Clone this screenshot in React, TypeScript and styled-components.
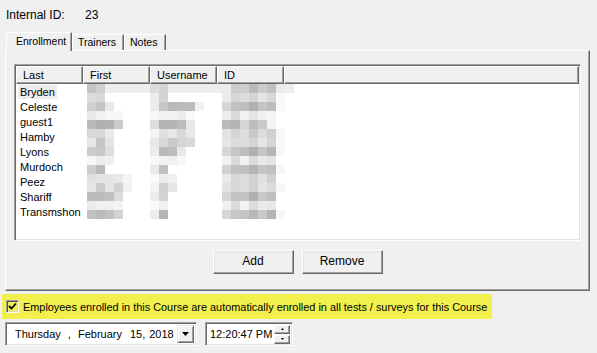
import * as React from 'react';
import styled, { createGlobalStyle } from 'styled-components';

const GlobalStyle = createGlobalStyle`
  body {
    margin: 0;
    background: #f0f0f0;
    font-family: "Liberation Sans", Arial, sans-serif;
    font-size: 11px;
    color: #000;
  }
`;

const Page = styled.div`
  width: 597px;
  height: 353px;
  overflow: hidden;
  background: #f0f0f0;
  white-space: nowrap;
`;

const IdRow = styled.div`
  display: flex;
  padding: 8px 0 0 6px;
  height: 14px;
  margin-bottom: 10px;
  font-size: 12px;
  line-height: 14px;
`;

const IdLabel = styled.span`
  width: 79px;
`;

const TabStrip = styled.div`
  position: relative;
  z-index: 1;
  display: flex;
  align-items: flex-end;
  height: 19px;
  padding-left: 6px;
  margin-bottom: -1px;
`;

const Tab = styled.div<{ $active?: boolean; $w: number }>`
  box-sizing: border-box;
  width: ${p => p.$w}px;
  height: ${p => (p.$active ? 19 : 16)}px;
  margin-bottom: ${p => (p.$active ? 0 : 1)}px;
  padding-left: ${p => (p.$active ? 9 : 5)}px;
  background: #f0f0f0;
  border-top: 1px solid #fff;
  border-left: 1px solid #fff;
  border-right: 1px solid #696969;
  box-shadow: inset -1px 0 #a0a0a0;
  font-size: 10.5px;
  line-height: ${p => (p.$active ? 16 : 15)}px;
`;

const Panel = styled.div`
  box-sizing: border-box;
  margin-left: 5px;
  width: 585px;
  height: 241px;
  padding: 13px 0 0 8px;
  border-top: 1px solid #fff;
  border-left: 1px solid #fff;
  border-right: 1px solid #696969;
  border-bottom: 1px solid #696969;
  box-shadow: inset -1px -1px #a0a0a0;
`;

const ListView = styled.div`
  box-sizing: border-box;
  width: 567px;
  height: 177px;
  background: #fff;
  border-top: 1px solid #a0a0a0;
  border-left: 1px solid #a0a0a0;
  border-right: 1px solid #fff;
  border-bottom: 1px solid #fff;
  box-shadow: inset 1px 1px #696969, inset -1px -1px #e3e3e3;
  padding: 1px;
  display: flex;
  flex-direction: column;
`;

const Header = styled.div`
  display: flex;
  height: 18px;
  flex: none;
`;

const HeadCell = styled.div<{ $w?: number }>`
  box-sizing: border-box;
  ${p => (p.$w ? `width: ${p.$w}px;` : 'flex: 1;')}
  height: 18px;
  padding-left: 6px;
  background: #f0f0f0;
  border-top: 1px solid #fff;
  border-left: 1px solid #fff;
  border-right: 1px solid #696969;
  border-bottom: 1px solid #696969;
  box-shadow: inset -1px -1px #a0a0a0;
  line-height: 16px;
`;

const Body = styled.div`
  position: relative;
  flex: 1;
  overflow: hidden;
`;

const Row = styled.div`
  height: 15px;
  line-height: 16px;
  padding-left: 2px;
`;

const Name = styled.span<{ $sel?: boolean }>`
  padding: 1px 2px;
  background: ${p => (p.$sel ? '#ececec' : 'transparent')};
`;

const Mosaic = styled.div`
  position: absolute;
  left: 71px;
  top: 0;
  display: grid;
  grid-template-columns: repeat(23, 9px);
  grid-auto-rows: 9px;
`;

const Pix = styled.div<{ $c: string }>`
  background: ${p => p.$c};
`;

const ButtonRow = styled.div`
  display: flex;
  justify-content: center;
  gap: 8px;
  margin-top: 9px;
  padding-right: 8px;
`;

const Button = styled.div`
  box-sizing: border-box;
  width: 81px;
  height: 24px;
  background: #f0f0f0;
  border-top: 1px solid #fff;
  border-left: 1px solid #fff;
  border-right: 1px solid #696969;
  border-bottom: 1px solid #696969;
  box-shadow: inset -1px -1px #a0a0a0, inset 1px 1px #e3e3e3;
  font-size: 12px;
  line-height: 21px;
  text-align: center;
`;

const Highlight = styled.div`
  display: flex;
  align-items: center;
  gap: 4px;
  margin: 3px 0 0 2px;
  width: 490px;
  height: 25px;
  padding-left: 4px;
  box-sizing: border-box;
  background: #f2f04c;
  font-size: 10.9px;
`;

const CheckBox = styled.div`
  box-sizing: border-box;
  width: 13px;
  height: 13px;
  border-top: 1px solid #a0a0a0;
  border-left: 1px solid #a0a0a0;
  border-right: 1px solid #fff;
  border-bottom: 1px solid #fff;
  box-shadow: inset 1px 1px #505050, inset -1px -1px #d8d8d8;
  display: flex;
  align-items: center;
  justify-content: center;
`;

const PickerRow = styled.div`
  display: flex;
  gap: 8px;
  margin-top: 3px;
  padding-left: 5px;
`;

const Field = styled.div<{ $w: number }>`
  box-sizing: border-box;
  width: ${p => p.$w}px;
  height: 24px;
  background: #fff;
  border-top: 1px solid #a0a0a0;
  border-left: 1px solid #a0a0a0;
  border-right: 1px solid #fff;
  border-bottom: 1px solid #fff;
  box-shadow: inset 1px 1px #696969, inset -1px -1px #e3e3e3;
  display: flex;
  align-items: center;
  font-size: 11px;
`;

const Part = styled.span<{ $ml: number }>`
  margin-left: ${p => p.$ml}px;
`;

const DropButton = styled.div`
  box-sizing: border-box;
  margin-left: auto;
  margin-right: 2px;
  width: 17px;
  height: 18px;
  background: #f0f0f0;
  border-top: 1px solid #e3e3e3;
  border-left: 1px solid #e3e3e3;
  border-right: 1px solid #696969;
  border-bottom: 1px solid #696969;
  box-shadow: inset 1px 1px #fff, inset -1px -1px #a0a0a0;
  display: flex;
  align-items: center;
  justify-content: center;
`;

const Spinner = styled.div`
  margin-left: auto;
  margin-right: 2px;
  display: flex;
  flex-direction: column;
  gap: 1px;
`;

const SpinButton = styled.div`
  box-sizing: border-box;
  width: 16px;
  height: 9px;
  background: #f0f0f0;
  border-top: 1px solid #fff;
  border-left: 1px solid #fff;
  border-right: 1px solid #696969;
  border-bottom: 1px solid #696969;
  box-shadow: inset -1px -1px #a0a0a0;
  display: flex;
  align-items: center;
  justify-content: center;
`;

const names = ['Bryden', 'Celeste', 'guest1', 'Hamby', 'Lyons', 'Murdoch', 'Peez', 'Shariff', 'Transmshon'];

// blurred cells, grey levels in hex, one grid of 9px squares
const firstCol = [
  'c4 d0 ed ed ed ed ed', 'dc d8', 'd0 c4 e9', 'e8 f1 f6 f8', 'ba b0 b3 cb',
  'd8 d7 e9', 'e7 c4 e5', 'cc c8 dd', 'f7 ec f0', 'cd ba',
  'e0 e4 e4 e8 f4', 'e6 cb e4 d2 f1', 'bc bc c0 dd', 'ec f0 f0 f4', 'c2 ba c2 d2',
];
const userCol = [
  'dc d4 ed ed ed ed ed ed', 'ec d4', 'ec c6 b8 bc bc f1', 'f7 f1 f1 ec f9', 'de b3 b4 bb e8',
  'f4 e1 e7 d8 e9', 'e8 d9 c9 d5 d9', 'ec b9 bd e9', 'f8 f1 f0 f8', 'ea c0',
  'f8 ec f0', 'f4 d0 e6', 'ec d4', 'fa f0', 'ec b5',
];
const idCol = [
  'eb cc ce ba cc c0 ec ed', 'ea d7 dc d5 e5 d8 f9', 'd6 c2 be b0 c5 bd f9', 'ec d9 f2 e5 f0 f5', 'ba b4 d5 bd c9 f4',
  'e3 d4 de c9 dc d0 f7', 'e6 dc dc d5 e5 d4 f9', 'd6 c6 be b0 c5 b6 f7', 'f1 da f2 dc ea e4', 'd2 c2 c0 b4 c5 c0 f7',
  'ea d8 dc d1 e0 d0', 'e2 d8 dc d1 e4 db f7', 'd6 c2 c2 b0 c9 c0', 'f1 da f2 dc ea e8', 'd6 c6 c4 b8 c9 b4 f7',
];

const pad = (s: string, n: number) => {
  const a = s.split(' ');
  while (a.length < n) a.push('');
  return a;
};

const cells: string[] = [];
for (let r = 0; r < 15; r++) {
  [...pad(firstCol[r], 7), ...pad(userCol[r], 8), ...pad(idCol[r], 8)].forEach(g =>
    cells.push(g ? `#${g}${g}${g}` : 'transparent'),
  );
}

export default function App() {
  return (
    <Page>
      <GlobalStyle />
      <IdRow>
        <IdLabel>Internal ID:</IdLabel>
        <span>23</span>
      </IdRow>
      <TabStrip>
        <Tab $active $w={66}>Enrollment</Tab>
        <Tab $w={52}>Trainers</Tab>
        <Tab $w={42}>Notes</Tab>
      </TabStrip>
      <Panel>
        <ListView>
          <Header>
            <HeadCell $w={67}>Last</HeadCell>
            <HeadCell $w={67}>First</HeadCell>
            <HeadCell $w={67}>Username</HeadCell>
            <HeadCell $w={67}>ID</HeadCell>
            <HeadCell />
          </Header>
          <Body>
            {names.map((n, i) => (
              <Row key={n}>
                <Name $sel={i === 0}>{n}</Name>
              </Row>
            ))}
            <Mosaic>
              {cells.map((c, i) => (
                <Pix key={i} $c={c} />
              ))}
            </Mosaic>
          </Body>
        </ListView>
        <ButtonRow>
          <Button>Add</Button>
          <Button>Remove</Button>
        </ButtonRow>
      </Panel>
      <Highlight>
        <CheckBox>
          <svg width="9" height="9" viewBox="0 0 9 9">
            <path d="M1 4 L3.5 6.5 L8 1.5" stroke="#000" strokeWidth="1.8" fill="none" />
          </svg>
        </CheckBox>
        <span>Employees enrolled in this Course are automatically enrolled in all tests / surveys for this Course</span>
      </Highlight>
      <PickerRow>
        <Field $w={192}>
          <Part $ml={9}>Thursday</Part>
          <Part $ml={7}>,</Part>
          <Part $ml={7}>February</Part>
          <Part $ml={8}>15,</Part>
          <Part $ml={4}>2018</Part>
          <DropButton>
            <svg width="7" height="4" viewBox="0 0 7 4">
              <path d="M0 0 H7 L3.5 4 Z" fill="#000" />
            </svg>
          </DropButton>
        </Field>
        <Field $w={88}>
          <Part $ml={4}>12:20:47 PM</Part>
          <Spinner>
            <SpinButton>
              <svg width="3" height="2" viewBox="0 0 3 2">
                <path d="M0 2 H3 L1.5 0 Z" fill="#000" />
              </svg>
            </SpinButton>
            <SpinButton>
              <svg width="3" height="2" viewBox="0 0 3 2">
                <path d="M0 0 H3 L1.5 2 Z" fill="#000" />
              </svg>
            </SpinButton>
          </Spinner>
        </Field>
      </PickerRow>
    </Page>
  );
}
